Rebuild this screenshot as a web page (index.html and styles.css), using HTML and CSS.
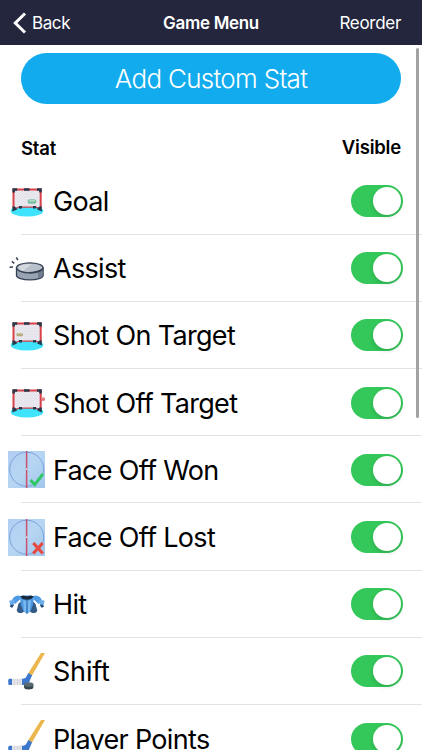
FILE: index.html
```html
<!DOCTYPE html>
<html lang="en">
<head>
  <meta charset="UTF-8" />
  <meta name="viewport" content="width=device-width, initial-scale=1.0"/>
  <title>Game Menu</title>
  <link rel="stylesheet" href="styles.css">
</head>
<body>

  <!-- shared icon shapes -->
  <svg class="defs" width="0" height="0">
    <defs>
      <pattern id="mesh" width="2.8" height="2.8" patternUnits="userSpaceOnUse">
        <rect width="2.8" height="2.8" fill="#f0eff5"/>
        <path d="M0 0l2.8 2.8M2.8 0L0 2.8" stroke="#d2cfdc" stroke-width=".45"/>
      </pattern>
      <linearGradient id="ice" x2="1" y2="1">
        <stop offset="0" stop-color="#b1cdf2"/>
        <stop offset=".5" stop-color="#b7d6f3"/>
        <stop offset="1" stop-color="#a0c5ec"/>
      </linearGradient>
      <symbol id="net" viewBox="0 0 37 37">
        <ellipse cx="19" cy="28" rx="16.3" ry="5.600" fill="#3fe3fb"/>
        <path d="M6 6.5h26v19l-4-1.5H11l-5 2z" fill="url(#mesh)"/>
        <path d="M5.500 25V6.500h27.200V25" fill="none" stroke="#d84149" stroke-width="2"/>
        <path d="M6 26.2l5-2h17l4.500 2" fill="none" stroke="#c93f4b" stroke-width="1.200"/>
        <path d="M5.700 9.500V6.500h3.500M29 6.500h3.500V9.500M16 6.500h5.500M5.700 23.500v3l2.800-1.200M32.500 23.500v3l-2.800-1.200M11 24.200h3M25 24.200H28" fill="none" stroke="#29384a" stroke-width="2.600"/>
      </symbol>
      <symbol id="rink" viewBox="0 0 37 37">
        <rect width="37" height="37" fill="url(#ice)"/>
        <circle cx="18.7" cy="18.2" r="17" fill="none" stroke="#7ba3da" stroke-width="1"/>
        <path d="M18.600 0v37" stroke="#c9516b" stroke-width="1.500"/>
        <circle cx="18.700" cy="18.200" r=".9" fill="#e7d7e8"/>
      </symbol>
      <symbol id="stick" viewBox="0 0 37 37">
        <path d="M33 0h4L24 22.500l-3.800-2.200z" fill="#ecb64f"/>
        <path d="M20.300 20l3.800 2.200-3.200 7.600c-.7 1.500-2 2.200-4 2.200H13v-6.200c3 0 4.600-.5 5.300-2z" fill="#3d78cc"/>
        <path d="M1.500 25.700H14V32H1.500Q.3 32 .3 30.500v-3.300Q.3 25.700 1.500 25.700z" fill="#e5e5e9"/>
        <path d="M1.500 25.700H4V32H1.500Q.3 32 .3 30.500v-3.300Q.3 25.700 1.500 25.700z" fill="#3d78cc"/>
        <path d="M6.500 25.800V32M9.500 25.800V32M12 25.800V32" stroke="#c8c9cf" stroke-width=".6"/>
      </symbol>
    </defs>
  </svg>

  <header class="navbar">
    <a class="back">
      <svg class="chevron" viewBox="0 0 14 22"><path d="M12 1.500L2.300 11 12 20.500"/></svg>
      <span>Back</span>
    </a>
    <h1 class="title">Game Menu</h1>
    <a class="reorder">Reorder</a>
  </header>

  <main class="content">
    <button class="add-stat">Add Custom Stat</button>

    <div class="list-head">
      <span>Stat</span>
      <span class="visible-label">Visible</span>
    </div>

    <ul class="stats">
      <li class="stat">
        <svg class="icon" viewBox="0 0 37 37">
          <use href="#net"/>
          <path d="M19.700 17.700q0-1.400 4.300-1.400t4.300 1.400v1.700q0 1.400-4.300 1.400t-4.300-1.400z" fill="#79bfa0"/>
          <ellipse cx="24" cy="17.700" rx="3.500" ry=".8" fill="#b5dfcb"/>
        </svg>
        <span class="name">Goal</span>
        <span class="switch"></span>
      </li>
      <li class="stat">
        <svg class="icon" viewBox="0 0 37 37">
          <path d="M8.500 18v7.500c0 2.500 6 4.300 13.300 4.300s13.300-1.800 13.300-4.300V18z" fill="#99a2b2" stroke="#343f52" stroke-width="1.300"/>
          <path d="M30 21v7.500c3-.8 4.500-1.800 4.500-3V18.500z" fill="#717c91"/>
          <ellipse cx="21.800" cy="17.800" rx="13.300" ry="5" fill="#b8c0cb" stroke="#343f52" stroke-width="1.300"/>
          <path d="M11 16.500q4-3 13-2.500L15 21q-4-1-4-4.500z" fill="#d4d9e0"/>
          <path d="M21 22.700q8 0 13.500-3.500" fill="none" stroke="#343f52" stroke-width="1.600"/>
          <path d="M8.300 7.500l1.600 2.700M3.800 11.400l2.500 2M1.500 17.300l3.500-.3" stroke="#394253" stroke-width="1.500"/>
        </svg>
        <span class="name">Assist</span>
        <span class="switch"></span>
      </li>
      <li class="stat">
        <svg class="icon" viewBox="0 0 37 37">
          <use href="#net"/>
          <rect x="8.500" y="16" width="6.400" height="3.300" rx="1.300" fill="#b2a778"/>
          <path d="M9.500 16.800h4.500" stroke="#ded5b1" stroke-width=".8"/>
        </svg>
        <span class="name">Shot On Target</span>
        <span class="switch"></span>
      </li>
      <li class="stat">
        <svg class="icon" viewBox="0 0 37 37">
          <use href="#net"/>
          <rect x="33" y="13.500" width="4" height="3.200" rx="1" fill="#d8686b"/>
          <path d="M33.500 14.800h3.200" stroke="#f3b2b1" stroke-width=".7"/>
        </svg>
        <span class="name">Shot Off Target</span>
        <span class="switch"></span>
      </li>
      <li class="stat">
        <svg class="icon" viewBox="0 0 37 37">
          <use href="#rink"/>
          <path d="M22.500 29l4.300 4.600L35 22.800" fill="none" stroke="#32c766" stroke-width="3"/>
        </svg>
        <span class="name">Face Off Won</span>
        <span class="switch"></span>
      </li>
      <li class="stat">
        <svg class="icon" viewBox="0 0 37 37">
          <use href="#rink"/>
          <path d="M25.300 24l9.500 10.500M34.700 24l-9.500 10.500" fill="none" stroke="#e64a43" stroke-width="3.200"/>
        </svg>
        <span class="name">Face Off Lost</span>
        <span class="switch"></span>
      </li>
      <li class="stat">
        <svg class="icon" viewBox="0 0 37 37">
          <path d="M13 10.500C9 8 5 11 3.800 14.500L7 18l5-4.500zM24.800 10.500c4-2.500 8 .5 9.200 4L30.500 18l-4.700-4.500z" fill="#4f9be4"/>
          <path d="M1 14.700l5.500-1 .2 3-2.700 5-2.200-1.300q1-2-.8-5.700zM36.800 14.700l-5.500-1-.2 3 2.500 5 2.400-1.300q-1-2 .8-5.700z" fill="#69ace9"/>
          <path d="M3.500 18.500l2.600.5-2 2.700-2.300-1.300zM34.300 18.500l-2.600.5 2 2.700 2.300-1.300z" fill="#2d4c72"/>
          <path d="M10.500 17.500L15 14l1 11.500c-2.500 2.500-6.500 2-7.300-1zM27.300 17.500L23 14l-1 11.500c2.500 2.500 6.500 2 7.300-1z" fill="#345b88"/>
          <path d="M12 10.500l4-1h6l4 1-1 8-2.500 6.500-3.600 3-3.600-3-2.500-6.500z" fill="#4b97df"/>
          <path d="M15 14l3.300 1v12L16 25zM23 14l-3.300 1v12L22 25z" fill="#79b7ef"/>
          <path d="M12.300 10.300l3-.8q3.700 1.500 7.400 0l3 .8-2 2.500q-4.700 1.800-9.400 0z" fill="#17293e"/>
          <path d="M19 14v13.500" stroke="#2e659d" stroke-width=".8"/>
        </svg>
        <span class="name">Hit</span>
        <span class="switch"></span>
      </li>
      <li class="stat">
        <svg class="icon" viewBox="0 0 37 37">
          <use href="#stick"/>
          <path d="M16 31.500v2.600q0 2.500 4.700 2.500t4.700-2.500v-2.600z" fill="#37474f"/>
          <ellipse cx="20.700" cy="31.500" rx="4.700" ry="2.200" fill="#5a6b73"/>
        </svg>
        <span class="name shift">Shift</span>
        <span class="switch"></span>
      </li>
      <li class="stat">
        <svg class="icon" viewBox="0 0 37 37"><use href="#stick"/></svg>
        <span class="name">Player Points</span>
        <span class="switch"></span>
      </li>
    </ul>
  </main>

  <div class="scrollbar"></div>

</body>
</html>
```

FILE: styles.css
```css
* {
  box-sizing: border-box;
}

body {
  margin: 0;
  height: 750px;
  overflow: hidden;
  background: #fff;
  color: #000;
  font-family: Inter, "Liberation Sans", sans-serif;
}

.defs {
  position: absolute;
}

.navbar {
  display: grid;
  grid-template-columns: 1fr auto 1fr;
  align-items: center;
  height: 45px;
  padding: 0 21px;
  background: #24263d;
  color: #fff;
  font-size: 17px;
}

.back {
  display: flex;
  align-items: center;
  gap: 5px;
  margin-left: -8px;
  letter-spacing: -0.4px;
}

.chevron {
  width: 14px;
  height: 22px;
  fill: none;
  stroke: #fff;
  stroke-width: 3;
}

.title {
  margin: 0;
  font-size: 17px;
  font-weight: 600;
  letter-spacing: -0.3px;
}

.reorder {
  justify-self: end;
  letter-spacing: -0.3px;
}

.content {
  padding-top: 8px;
}

.add-stat {
  display: block;
  width: 380px;
  height: 51px;
  margin: 0 0 0 21px;
  padding: 0;
  border: none;
  border-radius: 26px;
  background: #12acee;
  color: #fff;
  font-family: inherit;
  font-size: 26px;
  font-weight: 300;
  letter-spacing: -0.7px;
}

.list-head {
  display: flex;
  align-items: center;
  justify-content: space-between;
  height: 63.5px;
  padding: 24px 21px 0;
  font-size: 18.5px;
  font-weight: 600;
  letter-spacing: -0.2px;
}

.visible-label {
  margin-bottom: 1px;
}

.stats {
  margin: 0;
  padding: 0;
  list-style: none;
}

.stat {
  display: flex;
  align-items: center;
  height: 67.2px;
  padding: 0 19px 0 8px;
  background: linear-gradient(#e3e3e5, #e3e3e5) 21px 100% / 100% 1px no-repeat;
}

.icon {
  flex: none;
  width: 37px;
  height: 37px;
}

.name {
  flex: 1;
  margin-left: 8px;
  padding-top: 1px;
  font-size: 27px;
  letter-spacing: -0.68px;
  white-space: nowrap;
}

.shift {
  letter-spacing: -0.2px;
}

.switch {
  display: flex;
  justify-content: flex-end;
  width: 52px;
  height: 32px;
  padding: 2px;
  border-radius: 16px;
  background: #34c759;
}

.switch::before {
  content: "";
  width: 28px;
  height: 28px;
  border-radius: 50%;
  background: #fff;
  box-shadow: 0 2px 4px rgba(0, 0, 0, 0.14);
}

.scrollbar {
  position: absolute;
  top: 48px;
  right: 3px;
  width: 3px;
  height: 370px;
  border-radius: 2px;
  background: #a2a2a2;
}
```
